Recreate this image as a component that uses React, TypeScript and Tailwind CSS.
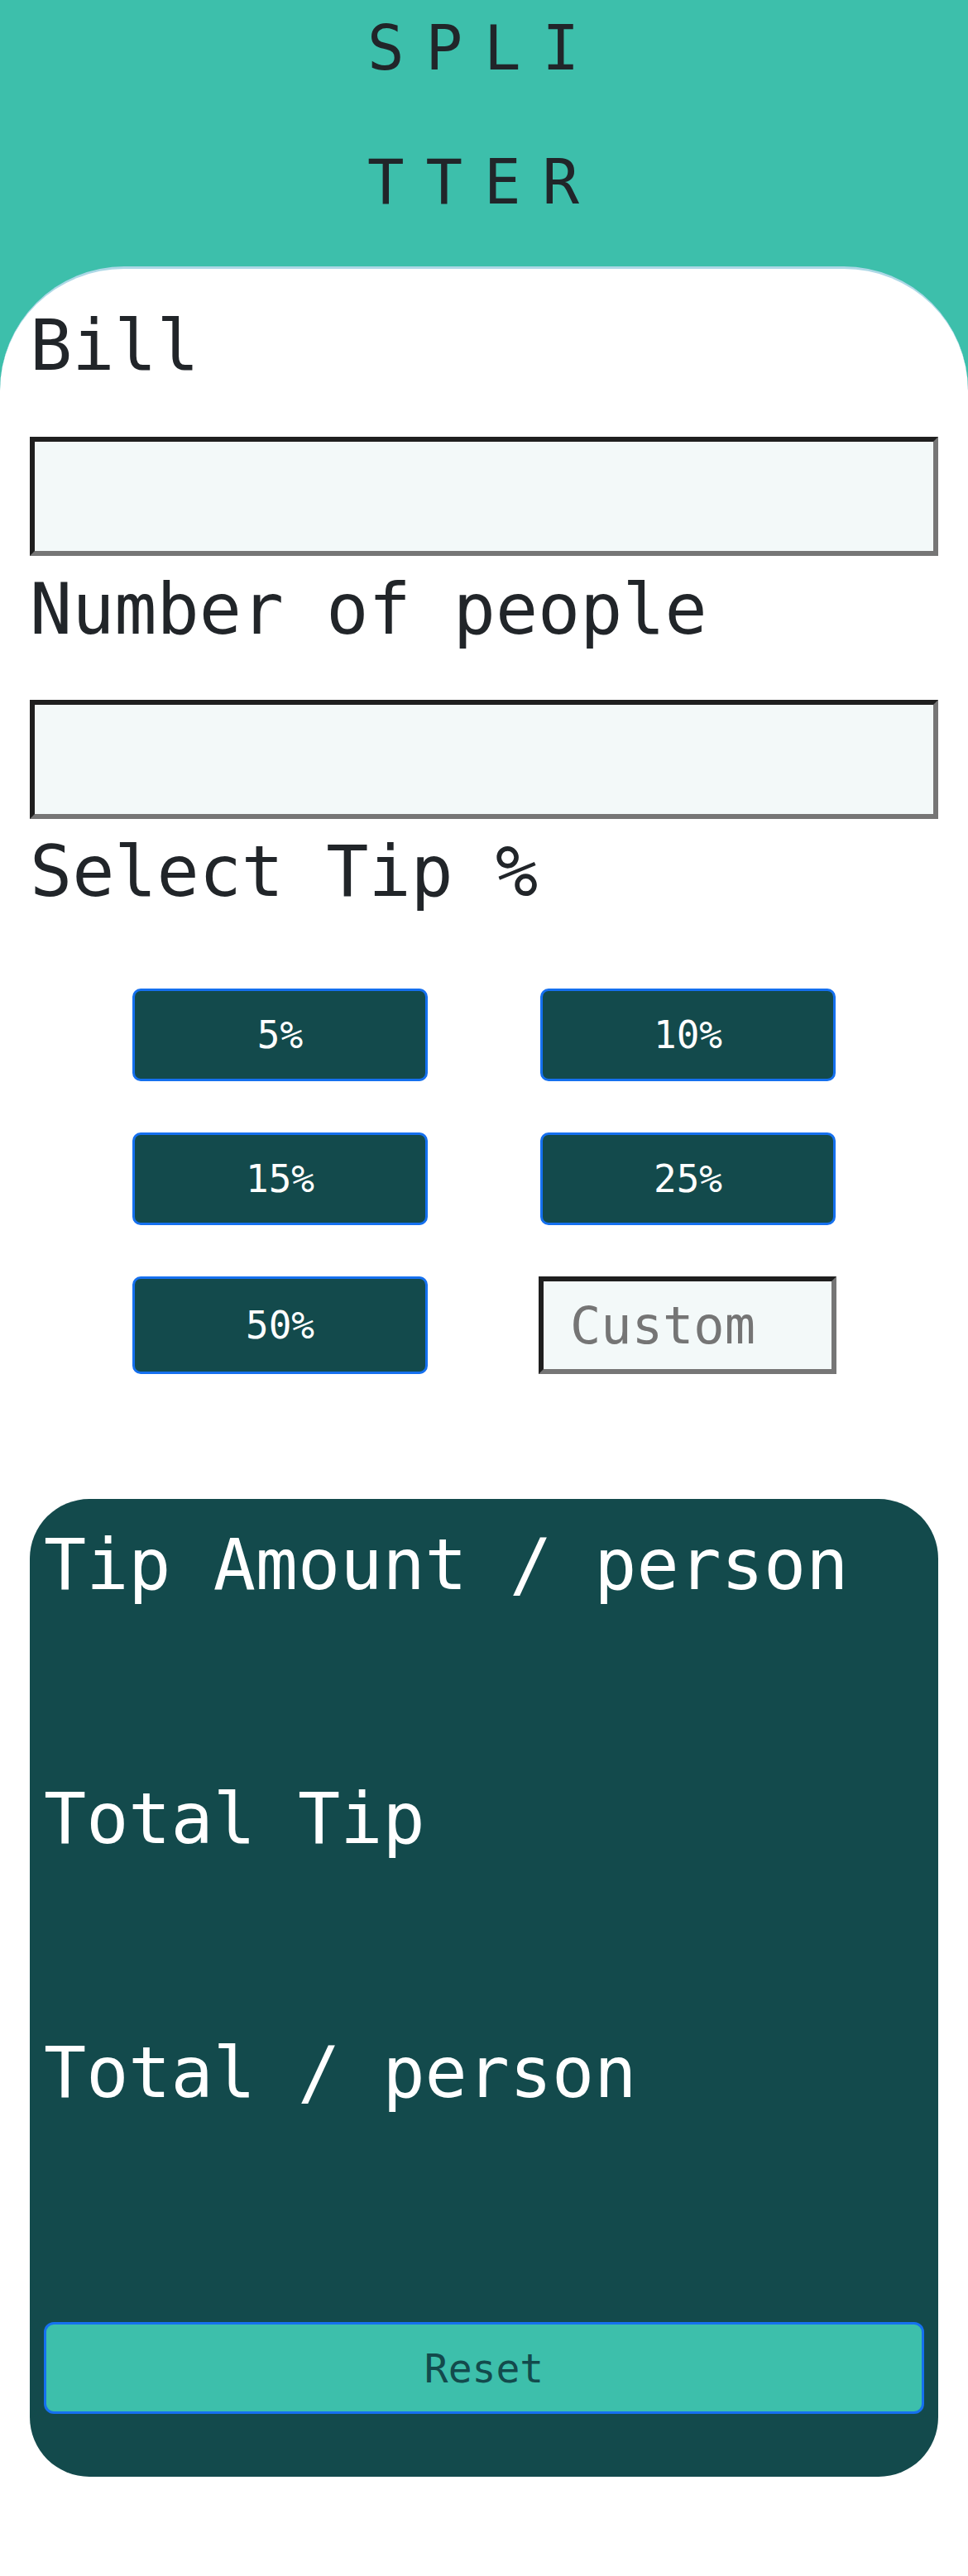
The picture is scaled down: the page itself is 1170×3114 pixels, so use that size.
import React, { useState } from "react";

const tips = ["5%", "10%", "15%", "25%", "50%"];

const labelCls = "block text-[85px] leading-[99px] text-[#212529]";
const inputCls =
  "block w-full h-[144px] bg-[#f3f9f9] border-[6px] border-solid border-t-[#1f1f1f] border-l-[#1f1f1f] border-r-[#767676] border-b-[#767676] outline-none";

export default function App() {
  const [bill, setBill] = useState("");
  const [people, setPeople] = useState("");

  return (
    <div className="min-h-[3114px] bg-white font-['DejaVu_Sans_Mono',monospace] text-[#212529]">
      <div className="bg-[#3dbfab]">
        {/* Header */}
        <div className="flow-root h-[322px]">
          <h1 className="mx-auto -mt-[23px] w-[300px] break-all text-center text-[74px] font-normal leading-[162px] tracking-[26px]">
            SPLITTER
          </h1>
        </div>

        {/* Card */}
        <div className="rounded-t-[150px] border-t-[3px] border-[#add8e6] bg-white px-[36px] pb-[120px] pt-[43px]">
          <label className={labelCls}>Bill</label>
          <input
            className={`${inputCls} mt-[61px]`}
            value={bill}
            onChange={(e) => setBill(e.target.value)}
          />

          <label className={`${labelCls} mt-[15px]`}>Number of people</label>
          <input
            className={`${inputCls} mt-[60px]`}
            value={people}
            onChange={(e) => setPeople(e.target.value)}
          />

          <label className={`${labelCls} mt-[14px]`}>Select Tip %</label>

          <div className="mt-[92px] grid grid-cols-[357px_357px] justify-center gap-x-[136px] gap-y-[62px]">
            {tips.map((t) => (
              <button
                key={t}
                className="h-full min-h-[112px] rounded-[10px] border-[3px] border-[#1570ef] bg-[#134a4c] text-[46px] text-white"
              >
                {t}
              </button>
            ))}
            <input
              placeholder="Custom"
              className="-ml-[2px] h-[118px] w-[360px] bg-[#f3f9f9] px-[32px] text-[62px] text-[#212529] placeholder:text-[#757575] border-[6px] border-solid border-t-[#1f1f1f] border-l-[#1f1f1f] border-r-[#767676] border-b-[#767676] outline-none"
            />
          </div>

          {/* Results */}
          <div className="mt-[151px] rounded-[72px] bg-[#134a4c] px-[17px] pb-[76px] pt-[30px] text-white">
            <p className="mb-[208px] text-[85px] leading-[99px]">Tip Amount / person</p>
            <p className="mb-[208px] text-[85px] leading-[99px]">Total Tip</p>
            <p className="mb-[252px] text-[85px] leading-[99px]">Total / person</p>
            <button className="block h-[111px] w-full rounded-[12px] border-[3px] border-[#1570ef] bg-[#3dbfab] text-[48px] text-[#134a4c]">
              Reset
            </button>
          </div>
        </div>
      </div>
    </div>
  );
}
